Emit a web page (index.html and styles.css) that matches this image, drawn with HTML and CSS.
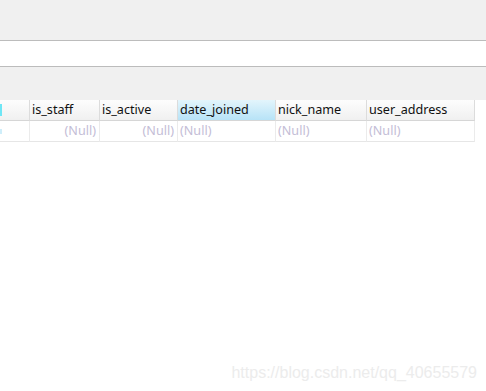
FILE: index.html
```html
<!DOCTYPE html>
<html lang="en">
<head>
    <meta charset="UTF-8">
    <title>Table data</title>
    <link rel="stylesheet" href="styles.css">
</head>
<body>
    <div class="toolbar"></div>
    <div class="filter-bar"></div>
    <div class="tab-strip"></div>

    <div class="data-grid">
        <div class="grid-row header-row">
            <div class="cell col-a"><span class="mark"></span></div>
            <div class="cell col-staff">is_staff</div>
            <div class="cell col-active">is_active</div>
            <div class="cell col-joined selected">date_joined</div>
            <div class="cell col-nick">nick_name</div>
            <div class="cell col-addr">user_address</div>
        </div>
        <div class="grid-row data-row">
            <div class="cell col-a"><span class="mark light"></span></div>
            <div class="cell col-staff null num">(Null)</div>
            <div class="cell col-active null num">(Null)</div>
            <div class="cell col-joined null">(Null)</div>
            <div class="cell col-nick null">(Null)</div>
            <div class="cell col-addr null">(Null)</div>
        </div>
    </div>

    <div class="watermark">https://blog.csdn.net/qq_40655579</div>
</body>
</html>
```

FILE: styles.css
```css
/* --- Base --- */
body, html {
    margin: 0;
    padding: 0;
    height: 100%;
    background: #ffffff;
    font-family: 'Noto Sans', sans-serif;
    overflow: hidden;
}

body {
    position: relative;
}

/* --- Top bars --- */
.toolbar {
    height: 40px;
    background: #f0f0f0;
    border-bottom: 1px solid #bcbcbc;
}

.filter-bar {
    height: 25px;
    background: #ffffff;
    border-bottom: 1px solid #bcbcbc;
}

.tab-strip {
    height: 33px;
    background: #f0f0f0;
}

/* --- Grid --- */
.data-grid {
    width: 475px;
}

.grid-row {
    display: flex;
}

.cell {
    box-sizing: border-box;
    border-right: 1px solid #dcdcdc;
    padding: 0 3px 2px 2px;
    font-size: 12.6px;
    white-space: nowrap;
    overflow: hidden;
    display: flex;
    align-items: center;
    position: relative;
}

.header-row .cell {
    height: 21px;
    color: #111111;
    background: linear-gradient(#fdfdfd, #f0f0f0);
    border-bottom: 1px solid #d6d6d6;
}

.header-row .cell.selected {
    background: linear-gradient(#e3f5fc, #b7e3f7);
}

.data-row .cell {
    height: 21px;
    border-bottom: 1px solid #e6e6e6;
    border-right-color: #ebebeb;
}

.null {
    color: #c3bdd6;
}

.num {
    justify-content: flex-end;
}

.col-a { width: 30px; }
.col-staff { width: 70px; }
.col-active { width: 78px; }
.col-joined { width: 98px; }
.col-nick { width: 91px; }
.col-addr { width: 108px; }

.mark {
    position: absolute;
    left: 0;
    top: 4px;
    width: 2px;
    height: 12px;
    background: #6fe6f5;
}

.mark.light {
    top: 8px;
    height: 5px;
    background: #cfeefa;
}

/* --- Watermark --- */
.watermark {
    position: absolute;
    right: 9px;
    bottom: 9px;
    font-family: 'Liberation Sans', Arial, sans-serif;
    font-size: 16px;
    color: #ececec;
}
```
